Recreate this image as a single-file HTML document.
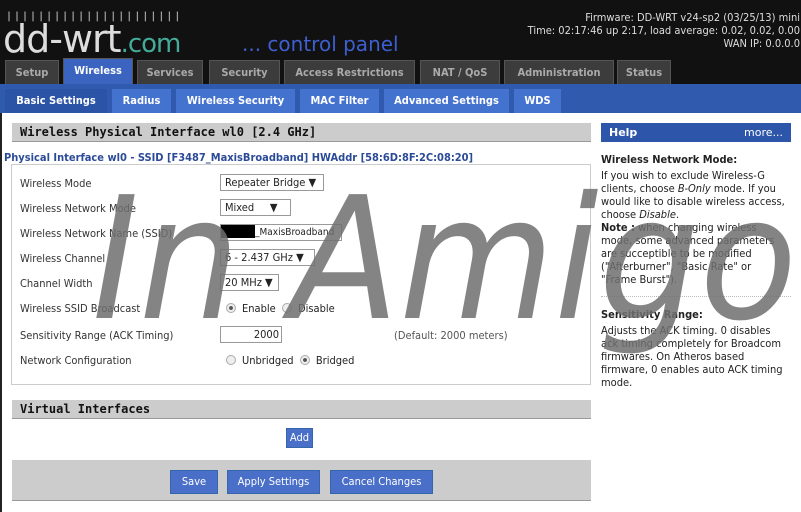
<!DOCTYPE html>
<html><head><meta charset="utf-8"><style>
*{margin:0;padding:0;box-sizing:border-box}
body{width:801px;height:512px;overflow:hidden;background:#fff;font-family:"DejaVu Sans Condensed","Liberation Sans",sans-serif;position:relative;font-size:11px;color:#222}
.hdr{position:absolute;left:0;top:0;width:801px;height:84px;background:#111}
.bars{position:absolute;left:6px;top:11px;font:bold 10px monospace;color:#aaa;letter-spacing:2px}
.logo{position:absolute;left:3px;top:17px;font:38px "DejaVu Sans",sans-serif;color:#ddd;letter-spacing:-1px}
.logo span{font-size:26px;color:#4a9;}
.cp{position:absolute;left:242px;top:32px;font:20px "DejaVu Sans",sans-serif;color:#3d5fd0}
.fw{position:absolute;right:1px;top:11px;text-align:right;color:#ddd;font:11px "DejaVu Sans Condensed",sans-serif;line-height:13px}
.tab{position:absolute;top:60px;height:24px;background:#3c3c3c;color:#aaa;font:bold 11px "DejaVu Sans Condensed",sans-serif;text-align:center;line-height:24px;border:1px solid #555;border-bottom:none}
.tab.on{background:#3a64c0;color:#fff;top:58px;height:26px}
.blue{position:absolute;left:0;top:84px;width:801px;height:29px;background:#2f5aae}
.st{position:absolute;top:89px;height:24px;background:#4472cf;color:#fff;font:bold 11px "DejaVu Sans Condensed",sans-serif;text-align:center;line-height:24px}
.st.on{background:#2c54a6}
.left{position:absolute;left:0;top:113px;width:2px;height:399px;background:#222}
.sh{position:absolute;left:12px;width:579px;height:19px;background:#ccc;border-bottom:1px solid #999;font:bold 12px "DejaVu Sans Mono",monospace;padding-left:8px;line-height:19px;color:#111}
.fs{position:absolute;left:11px;top:164px;width:580px;height:221px;border:1px solid #ccc}
.lg{position:absolute;left:4px;top:151px;background:#fff;color:#2b4b98;font:bold 11px "DejaVu Sans Condensed",sans-serif;padding-right:4px}
.lb{position:absolute;left:20px;font-size:11px;color:#333}
.sel{position:absolute;left:220px;height:17px;border:1px solid #999;background:#fff;font-size:11px;padding-left:4px;line-height:15px;white-space:nowrap;overflow:hidden}
.rd{display:inline-block;width:10px;height:10px;border-radius:50%;border:1px solid #aaa;background:#eee;vertical-align:-1px;margin-right:6px}
.rd.on{background:radial-gradient(#555 30%,#eee 40%)}
.btn{position:absolute;background:#4a6fc9;color:#fff;font:11px "DejaVu Sans Condensed",sans-serif;text-align:center;line-height:22px;border:1px solid #36a}
.help{position:absolute;left:601px;top:123px;width:190px;height:19px;background:#2d55a9;color:#fff;font:bold 11px "DejaVu Sans",sans-serif;line-height:19px;padding:0 8px 0 8px}
.ht{position:absolute;left:601px;width:188px;font-size:11px;line-height:13px;color:#222}
svg.wm{position:absolute;left:0;top:0;pointer-events:none}
</style></head><body>
<div class="hdr">
<div class="bars">||||||||||||||||||||||</div>
<div class="logo">dd-wrt<span>.com</span></div>
<div class="cp">... control panel</div>
<div class="fw">Firmware: DD-WRT v24-sp2 (03/25/13) mini<br>Time: 02:17:46 up 2:17, load average: 0.02, 0.02, 0.00<br>WAN IP: 0.0.0.0</div>
<div class="tab" style="left:5px;width:54px">Setup</div>
<div class="tab on" style="left:63px;width:70px">Wireless</div>
<div class="tab" style="left:137px;width:66px">Services</div>
<div class="tab" style="left:209px;width:71px">Security</div>
<div class="tab" style="left:284px;width:131px">Access Restrictions</div>
<div class="tab" style="left:420px;width:80px">NAT / QoS</div>
<div class="tab" style="left:504px;width:110px">Administration</div>
<div class="tab" style="left:617px;width:54px">Status</div>
</div>
<div class="blue"></div>
<div class="st on" style="left:5px;width:102px">Basic Settings</div>
<div class="st" style="left:112px;width:59px">Radius</div>
<div class="st" style="left:176px;width:119px">Wireless Security</div>
<div class="st" style="left:300px;width:79px">MAC Filter</div>
<div class="st" style="left:384px;width:125px">Advanced Settings</div>
<div class="st" style="left:514px;width:47px">WDS</div>
<div class="left"></div>
<div class="sh" style="top:123px">Wireless Physical Interface wl0 [2.4 GHz]</div>
<div class="fs"></div>
<div class="lg">Physical Interface wl0 - SSID [F3487_MaxisBroadband] HWAddr [58:6D:8F:2C:08:20]</div>
<div class="lb" style="top:177px">Wireless Mode</div>
<div class="lb" style="top:202px">Wireless Network Mode</div>
<div class="lb" style="top:227px">Wireless Network Name (SSID)</div>
<div class="lb" style="top:252px">Wireless Channel</div>
<div class="lb" style="top:277px">Channel Width</div>
<div class="lb" style="top:302px">Wireless SSID Broadcast</div>
<div class="lb" style="top:329px">Sensitivity Range (ACK Timing)</div>
<div class="lb" style="top:354px">Network Configuration</div>
<div class="sel" style="top:174px;width:104px">Repeater Bridge ▼</div>
<div class="sel" style="top:199px;width:71px">Mixed &nbsp;&nbsp;&nbsp;&nbsp;▼</div>
<div class="sel" style="top:224px;width:122px;padding-left:0;font-size:10px"><span style="display:inline-block;width:34px;height:13px;background:#000;vertical-align:-3px"></span>_MaxisBroadband</div>
<div class="sel" style="top:249px;width:95px">6 - 2.437 GHz ▼</div>
<div class="sel" style="top:274px;width:59px">20 MHz ▼</div>
<div style="position:absolute;left:226px;top:302px"><span class="rd on"></span>Enable &nbsp;<span class="rd"></span>Disable</div>
<div class="sel" style="top:326px;width:62px;text-align:right;padding-right:2px">2000</div>
<div style="position:absolute;left:394px;top:329px;color:#555">(Default: 2000 meters)</div>
<div style="position:absolute;left:226px;top:354px"><span class="rd"></span>Unbridged &nbsp;<span class="rd on"></span>Bridged</div>
<div class="sh" style="top:400px">Virtual Interfaces</div>
<div class="btn" style="left:286px;top:428px;width:27px;height:20px;line-height:18px">Add</div>
<div style="position:absolute;left:12px;top:460px;width:579px;height:41px;background:#ccc;border-bottom:1px solid #999"></div>
<div class="btn" style="left:170px;top:470px;width:48px">Save</div>
<div class="btn" style="left:227px;top:470px;width:93px">Apply Settings</div>
<div class="btn" style="left:330px;top:470px;width:103px">Cancel Changes</div>
<div class="help">Help<span style="float:right;font-weight:normal">more...</span></div>
<div class="ht" style="top:153px"><b>Wireless Network Mode:</b><br><div style="margin-top:3px">If you wish to exclude Wireless-G clients, choose <i>B-Only</i> mode. If you would like to disable wireless access, choose <i>Disable</i>.<br><b>Note :</b> when changing wireless mode, some advanced parameters are succeptible to be modified ("Afterburner", "Basic Rate" or "Frame Burst").</div></div>
<div style="position:absolute;left:601px;top:296px;width:190px;border-top:1px dotted #bbb"></div>
<div class="ht" style="top:308px"><b>Sensitivity Range:</b><br><div style="margin-top:3px">Adjusts the ACK timing. 0 disables ack timing completely for Broadcom firmwares. On Atheros based firmware, 0 enables auto ACK timing mode.</div></div>
<svg class="wm" width="801" height="512"><text x="92" y="318" font-family="DejaVu Sans" font-style="italic" font-size="170" textLength="705" lengthAdjust="spacingAndGlyphs" fill="rgba(110,110,110,0.85)">In Amigo</text></svg>
</body></html>
